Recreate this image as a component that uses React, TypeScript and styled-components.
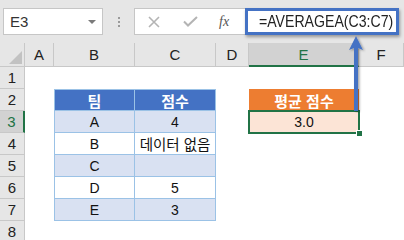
import styled, { createGlobalStyle, css } from 'styled-components';

const GlobalStyle = createGlobalStyle`
  html, body {
    margin: 0;
    padding: 0;
    background: #ffffff;
    overflow: hidden;
  }
  body {
    font-family: 'Liberation Sans', 'Noto Sans CJK KR', sans-serif;
  }
`;

const Page = styled.div`
  position: relative;
  width: 404px;
  height: 240px;
  overflow: hidden;
  background: #ffffff;
`;

const Toolbar = styled.div`
  display: flex;
  align-items: center;
  height: 43px;
  padding: 0 5px 0 3px;
  box-sizing: border-box;
  background: #e6e6e6;
  & > * {
    flex-shrink: 0;
  }
`;

const NameBox = styled.div`
  display: flex;
  align-items: center;
  justify-content: space-between;
  width: 100px;
  height: 27px;
  box-sizing: border-box;
  padding: 0 6px 0 6px;
  background: #ffffff;
  border: 1px solid #c6c6c6;
  font-size: 15px;
  color: #333333;
`;

const Caret = styled.span`
  width: 0;
  height: 0;
  border-left: 4px solid transparent;
  border-right: 4px solid transparent;
  border-top: 4px solid #7a7a7a;
`;

const Dots = styled.div`
  display: flex;
  flex-direction: column;
  gap: 2px;
  margin: 0 14px 0 15px;
  span {
    width: 2px;
    height: 2px;
    background: #9a9a9a;
  }
`;

const ButtonBox = styled.div`
  display: flex;
  align-items: center;
  width: 111px;
  height: 27px;
  box-sizing: border-box;
  padding-left: 13px;
  gap: 23px;
  background: #ffffff;
  border: 1px solid #c6c6c6;
  border-right: none;
`;

const Fx = styled.span`
  font-family: 'Liberation Serif', serif;
  font-style: italic;
  font-size: 14px;
  color: #555555;
  margin-left: -2px;
`;

const FormulaBox = styled.div`
  display: flex;
  align-items: center;
  flex: 1 1 auto;
  min-width: 0;
  height: 27px;
  box-sizing: border-box;
  padding-left: 11px;
  background: #ffffff;
  border: 3px solid #4472c4;
  box-shadow: 1px 2px 3px rgba(0, 0, 0, 0.35);
  font-size: 17px;
  color: #222222;
  white-space: nowrap;
  overflow: hidden;
  z-index: 2;
`;

const FormulaText = styled.span`
  display: inline-block;
  transform: scaleX(0.83);
  transform-origin: left center;
`;

const Sheet = styled.div`
  display: grid;
  grid-template-columns: 25px 29px 81px 81px 33px 110px 45px;
  grid-template-rows: 24px repeat(8, 22px);
`;

const HeadCell = styled.div<{ $active?: boolean; $row?: boolean }>`
  display: flex;
  align-items: center;
  justify-content: center;
  box-sizing: border-box;
  background: #e6e6e6;
  font-size: 15px;
  color: #222222;
  border-right: 1px solid #c8c8c8;
  border-bottom: 1px solid #c8c8c8;
  ${(p) =>
    p.$active &&
    css`
      background: #d2d2d2;
      color: #217346;
      ${p.$row
        ? css`border-right: 2px solid #217346;`
        : css`border-bottom: 2px solid #217346;`}
    `}
`;

const Corner = styled(HeadCell)`
  position: relative;
  &::after {
    content: '';
    position: absolute;
    right: 2px;
    bottom: 2px;
    width: 0;
    height: 0;
    border-left: 13px solid transparent;
    border-bottom: 13px solid #c2c2c2;
  }
`;

const Cell = styled.div`
  background: #ffffff;
`;

type Tone = 'head' | 'band' | 'plain';

const TableCell = styled.div<{ $tone: Tone; $first?: boolean; $top?: boolean }>`
  display: flex;
  align-items: center;
  justify-content: center;
  box-sizing: border-box;
  font-size: 14px;
  color: #111111;
  white-space: nowrap;
  border-right: 1px solid #9bc2e6;
  border-bottom: 1px solid #9bc2e6;
  ${(p) => p.$first && css`border-left: 1px solid #9bc2e6;`}
  ${(p) => p.$top && css`border-top: 1px solid #9bc2e6;`}
  background: ${(p) =>
    p.$tone === 'head' ? '#4472c4' : p.$tone === 'band' ? '#d9e1f2' : '#ffffff'};
  ${(p) =>
    p.$tone === 'head' &&
    css`
      color: #ffffff;
      font-weight: bold;
      font-size: 15px;
    `}
`;

const Hangul = styled.span`
  font-size: 14.5px;
`;

const AvgHead = styled.div`
  display: flex;
  align-items: center;
  justify-content: center;
  background: #ed7d31;
  color: #ffffff;
  font-weight: bold;
  font-size: 15px;
`;

const AvgValue = styled.div`
  position: relative;
  display: flex;
  align-items: center;
  justify-content: center;
  background: #fce4d6;
  font-size: 14px;
  color: #111111;
  box-shadow: 0 0 0 1px #217346, inset 0 0 0 1px #217346;
  &::after {
    content: '';
    position: absolute;
    right: -4px;
    bottom: -4px;
    width: 5px;
    height: 5px;
    background: #217346;
    border: 1px solid #ffffff;
  }
`;

const Arrow = styled.svg`
  position: absolute;
  left: 346px;
  top: 35px;
  z-index: 3;
`;

const cols = ['A', 'B', 'C', 'D', 'E', 'F'];

const tableRows: { team: string; score: string }[] = [
  { team: 'A', score: '4' },
  { team: 'B', score: '데이터 없음' },
  { team: 'C', score: '' },
  { team: 'D', score: '5' },
  { team: 'E', score: '3' },
];

export default function App() {
  return (
    <Page>
      <GlobalStyle />
      <Toolbar>
        <NameBox>
          E3
          <Caret />
        </NameBox>
        <Dots>
          <span />
          <span />
          <span />
        </Dots>
        <ButtonBox>
          <svg width="12" height="12" viewBox="0 0 12 12">
            <path d="M1 1L11 11M11 1L1 11" stroke="#b4b4b4" strokeWidth="1.6" fill="none" />
          </svg>
          <svg width="15" height="11" viewBox="0 0 15 11">
            <path d="M1 5.5L5 9.5L14 1" stroke="#b4b4b4" strokeWidth="2" fill="none" />
          </svg>
          <Fx>fx</Fx>
        </ButtonBox>
        <FormulaBox>
          <FormulaText>=AVERAGEA(C3:C7)</FormulaText>
        </FormulaBox>
      </Toolbar>

      <Sheet>
        <Corner />
        {cols.map((c) => (
          <HeadCell key={c} $active={c === 'E'}>
            {c}
          </HeadCell>
        ))}

        {Array.from({ length: 8 }, (_, i) => i + 1).map((r) => {
          const rowCells = [];
          rowCells.push(
            <HeadCell key={`h${r}`} $row $active={r === 3}>
              {r}
            </HeadCell>,
          );
          rowCells.push(<Cell key={`a${r}`} />);
          if (r === 2) {
            rowCells.push(
              <TableCell key="b2" $tone="head" $first $top>
                팀
              </TableCell>,
              <TableCell key="c2" $tone="head" $top>
                점수
              </TableCell>,
            );
          } else if (r >= 3 && r <= 7) {
            const d = tableRows[r - 3];
            const tone: Tone = r % 2 === 1 ? 'band' : 'plain';
            rowCells.push(
              <TableCell key={`b${r}`} $tone={tone} $first>
                {d.team}
              </TableCell>,
              <TableCell key={`c${r}`} $tone={tone}>
                {d.score.length > 1 ? <Hangul>{d.score}</Hangul> : d.score}
              </TableCell>,
            );
          } else {
            rowCells.push(<Cell key={`b${r}`} />, <Cell key={`c${r}`} />);
          }
          rowCells.push(<Cell key={`d${r}`} />);
          if (r === 2) rowCells.push(<AvgHead key="e2">평균 점수</AvgHead>);
          else if (r === 3) rowCells.push(<AvgValue key="e3">3.0</AvgValue>);
          else rowCells.push(<Cell key={`e${r}`} />);
          rowCells.push(<Cell key={`f${r}`} />);
          return rowCells;
        })}
      </Sheet>

      <Arrow width="20" height="78" viewBox="0 0 20 78">
        <defs>
          <filter id="sh" x="-50%" y="-10%" width="200%" height="130%">
            <feDropShadow dx="1.5" dy="1" stdDeviation="1" floodColor="#000" floodOpacity="0.35" />
          </filter>
        </defs>
        <path
          d="M10 1L17 15L12 13L12 76L8 76L8 13L3 15Z"
          fill="#4472c4"
          filter="url(#sh)"
        />
      </Arrow>
    </Page>
  );
}
